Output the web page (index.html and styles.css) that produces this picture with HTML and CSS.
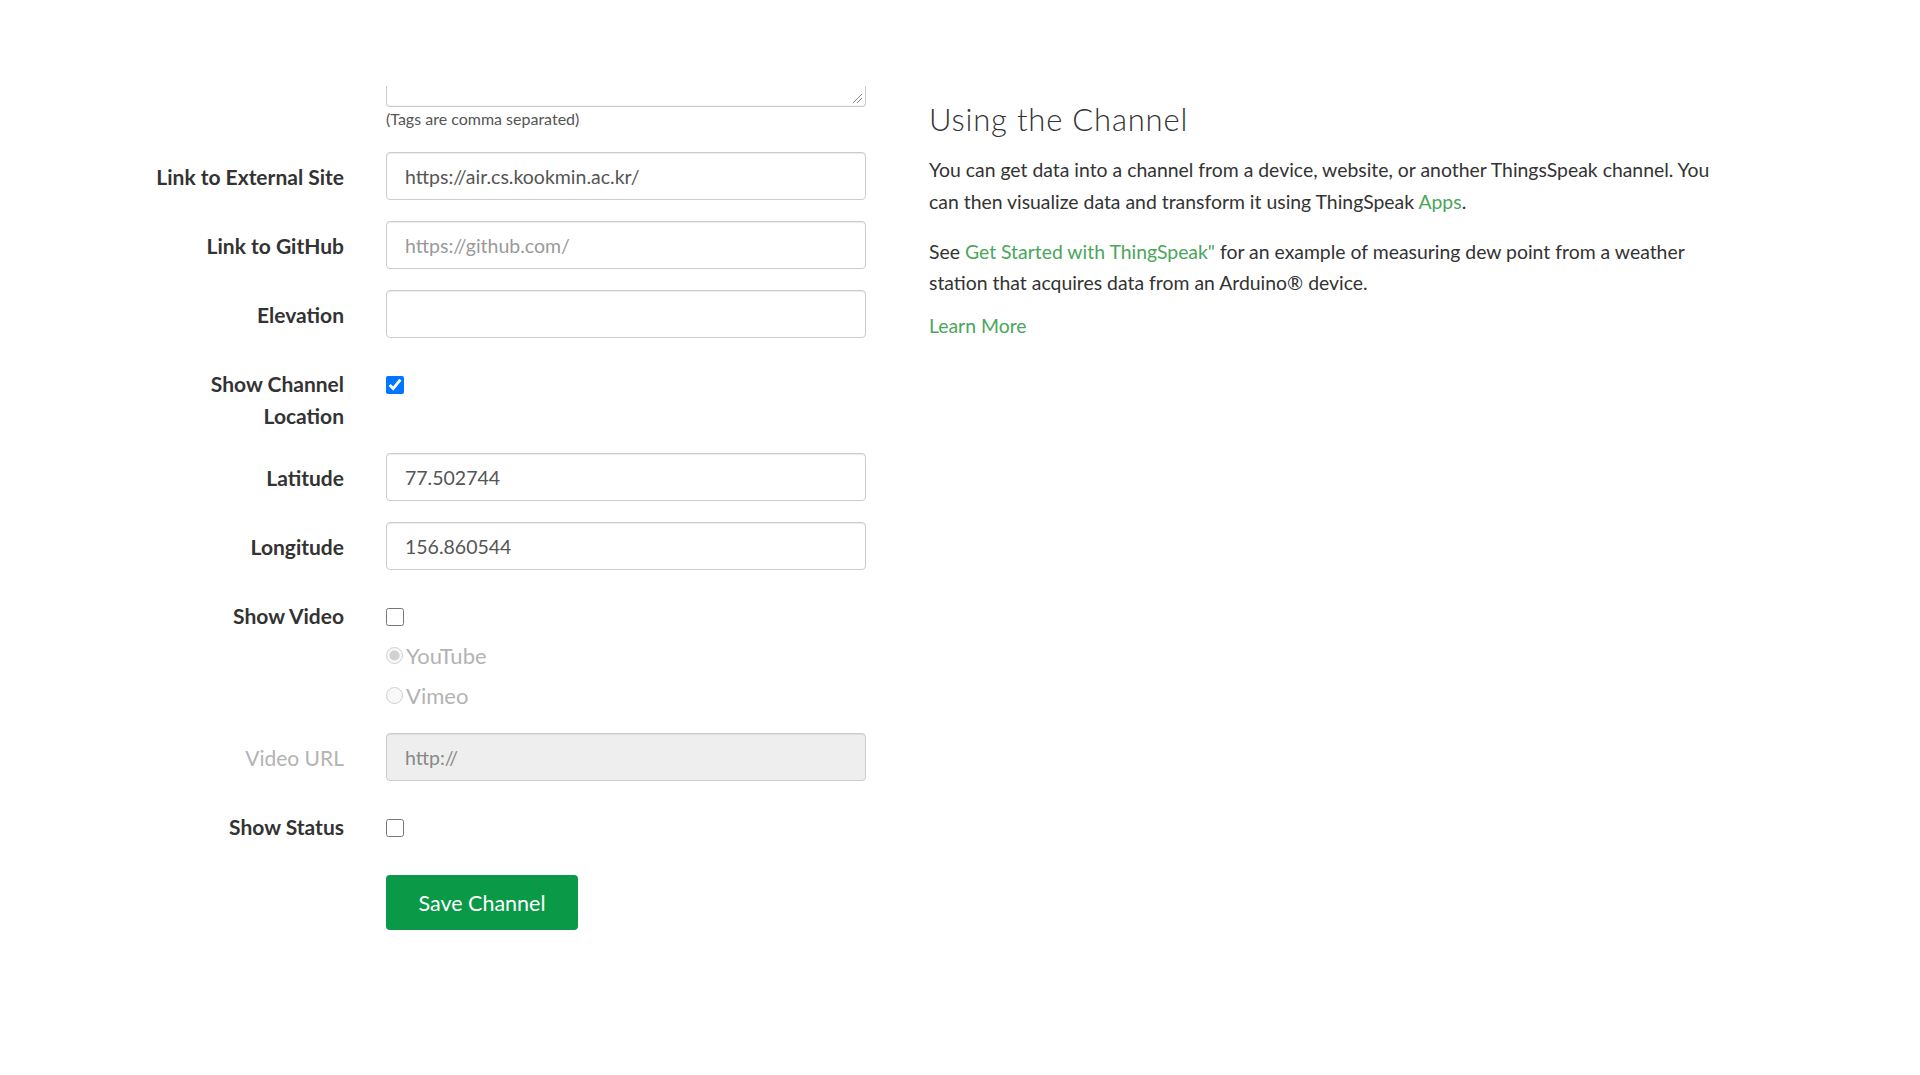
FILE: index.html
```html
<!DOCTYPE html>
<html lang="en">
<head>
<meta charset="utf-8">
<title>Channel Settings</title>
<link rel="stylesheet" href="styles.css">
</head>
<body>
<div class="page">
  <form class="form-col">
    <div class="row row-tags">
      <div class="label"></div>
      <div class="control">
        <div class="textarea-tail"><span class="grip"></span></div>
        <div class="help">(Tags are comma separated)</div>
      </div>
    </div>
    <div class="row">
      <label class="label">Link to External Site</label>
      <div class="control"><input class="input" type="text" value="https://air.cs.kookmin.ac.kr/"></div>
    </div>
    <div class="row">
      <label class="label">Link to GitHub</label>
      <div class="control"><input class="input" type="text" placeholder="https://github.com/"></div>
    </div>
    <div class="row">
      <label class="label">Elevation</label>
      <div class="control"><input class="input" type="text"></div>
    </div>
    <div class="row row-check">
      <label class="label">Show Channel<br>Location</label>
      <div class="control"><input class="check" type="checkbox" checked></div>
    </div>
    <div class="row">
      <label class="label">Latitude</label>
      <div class="control"><input class="input" type="text" value="77.502744"></div>
    </div>
    <div class="row">
      <label class="label">Longitude</label>
      <div class="control"><input class="input" type="text" value="156.860544"></div>
    </div>
    <div class="row row-video">
      <label class="label">Show Video</label>
      <div class="control">
        <input class="check" type="checkbox">
        <div class="radios">
          <label class="radio"><input type="radio" name="v" checked disabled>YouTube</label>
          <label class="radio"><input type="radio" name="v" disabled>Vimeo</label>
        </div>
      </div>
    </div>
    <div class="row">
      <label class="label muted">Video URL</label>
      <div class="control"><input class="input" type="text" value="http://" disabled></div>
    </div>
    <div class="row row-status">
      <label class="label">Show Status</label>
      <div class="control"><input class="check" type="checkbox"></div>
    </div>
    <div class="row">
      <div class="label"></div>
      <div class="control"><button class="btn" type="button">Save Channel</button></div>
    </div>
  </form>
  <aside class="info-col">
    <h3 class="info-title">Using the Channel</h3>
    <p class="info-text info-first">You can get data into a channel from a device, website, or another ThingsSpeak channel. You can then visualize data and transform it using ThingSpeak <a href="#">Apps</a>.</p>
    <p class="info-text info-second">See <a href="#">Get Started with ThingSpeak"</a> for an example of measuring dew point from a weather station that acquires data from an Arduino® device.</p>
    <p class="info-text"><a href="#">Learn More</a></p>
  </aside>
</div>
</body>
</html>
```
FILE: styles.css
```css
html, body {
  margin: 0;
  padding: 0;
  background: #fff;
}
body {
  font-family: Lato, "Noto Sans", sans-serif;
  color: #333;
}
.page {
  display: flex;
  padding: 86px 0 0 150px;
}
.form-col {
  width: 716px;
  flex: none;
  display: flex;
  flex-direction: column;
}
.row {
  display: flex;
  gap: 42px;
  margin-bottom: 21px;
}
.row-tags {
  margin-bottom: 23px;
}
.label {
  width: 194px;
  flex: none;
  text-align: right;
  font-weight: 700;
  font-size: 21px;
  line-height: 32px;
  padding-top: 9px;
  color: #333;
}
.label.muted {
  color: #b3b3b3;
  font-weight: 400;
}
.control {
  width: 480px;
  flex: none;
}
.textarea-tail {
  height: 20px;
  border: 1px solid #ccc;
  border-top: none;
  border-radius: 0 0 4px 4px;
  position: relative;
  box-shadow: inset 0 -1px 1px rgba(0,0,0,.05);
}
.grip {
  position: absolute;
  right: 3px;
  bottom: 3px;
  width: 9px;
  height: 9px;
  background: linear-gradient(135deg, transparent 45%, #888 45%, #888 52%, transparent 52%, transparent 70%, #888 70%, #888 77%, transparent 77%);
}
.help {
  font-size: 16px;
  line-height: 20px;
  margin-top: 2px;
  color: #555;
}
.input {
  box-sizing: border-box;
  width: 480px;
  height: 48px;
  padding: 0 18px;
  font-family: inherit;
  font-size: 19.5px;
  color: #555;
  background: #fff;
  border: 1px solid #ccc;
  border-radius: 4px;
  box-shadow: inset 0 1px 1px rgba(0,0,0,.075);
  outline: none;
}
.input::placeholder {
  color: #999;
}
.input:disabled {
  background: #eee;
  color: #888;
}
.check {
  width: 18px;
  height: 18px;
  margin: 17px 0 0 0;
  accent-color: #0075ff;
}
.row-check {
  margin-bottom: 21px;
}
.radios {
  margin-top: 6px;
}
.radio {
  display: flex;
  align-items: center;
  height: 40px;
  font-size: 22px;
  color: #b3b3b3;
}
.radio input {
  width: 17px;
  height: 17px;
  margin: 0 3px 0 0;
}
.row-video {
  margin-bottom: 18px;
}
.row-status {
  margin-bottom: 32px;
}
.btn {
  width: 192px;
  height: 55px;
  background: #0a9947;
  color: #fff;
  border: none;
  border-radius: 4px;
  font-family: inherit;
  font-size: 21.5px;
  cursor: pointer;
}
.info-col {
  width: 790px;
  flex: none;
  margin-left: 63px;
}
.info-title {
  font-weight: 300;
  font-size: 31px;
  line-height: 40px;
  color: #333;
  margin: 13px 0 15px 0;
  letter-spacing: 0.8px;
}
.info-text {
  font-size: 19.4px;
  line-height: 32px;
  margin: 0;
  color: #333;
}
.info-first {
  margin-bottom: 18px;
}
.info-second {
  line-height: 31px;
  margin-bottom: 12px;
}
.info-text a {
  color: #4aa65a;
  text-decoration: none;
}
```
